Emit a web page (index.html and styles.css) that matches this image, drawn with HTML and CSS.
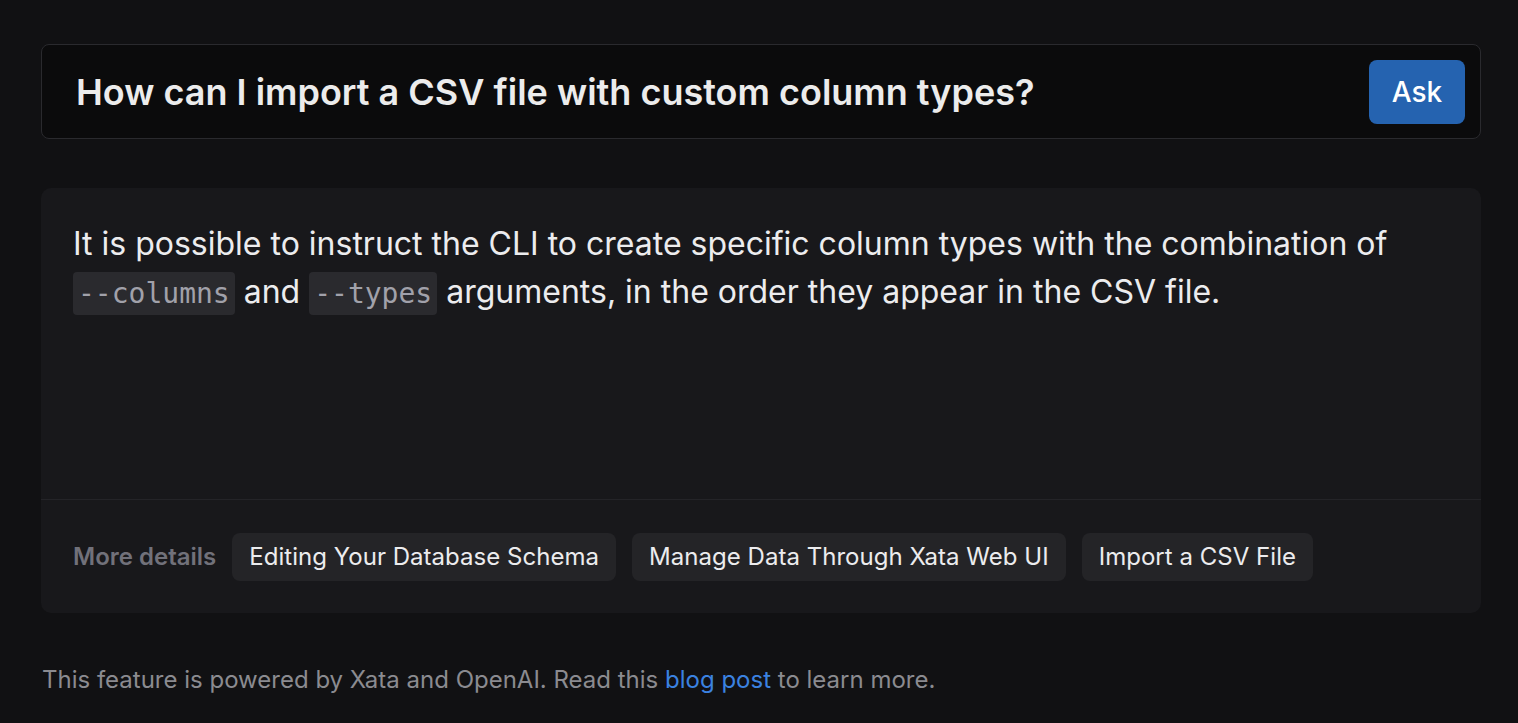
FILE: index.html
```html
<!DOCTYPE html>
<html>
<head>
<meta charset="utf-8">
<link rel="stylesheet" href="styles.css">
</head>
<body>
<main class="page">
  <form class="ask-bar">
    <div class="question">How can I import a CSV file with custom column types?</div>
    <button type="button" class="ask-btn">Ask</button>
  </form>
  <section class="answer">
    <div class="answer-body">
      <p>It is possible to instruct the CLI to create specific column types with the combination of <code>--columns</code> and <code>--types</code> arguments, in the order they appear in the CSV file.</p>
    </div>
    <div class="answer-footer">
      <span class="more">More details</span>
      <a class="chip">Editing Your Database Schema</a>
      <a class="chip">Manage Data Through Xata Web UI</a>
      <a class="chip">Import a CSV File</a>
    </div>
  </section>
  <p class="note">This feature is powered by Xata and OpenAI. Read this <a href="#">blog post</a> to learn more.</p>
</main>
</body>
</html>
```
FILE: styles.css
```css
html, body { margin: 0; padding: 0; }
body {
  background: #111113;
  font-family: Inter, "Noto Sans", sans-serif;
  color: #ececee;
  height: 723px;
  overflow: hidden;
}
.page {
  padding: 44px 37px 0 41px;
  display: flex;
  flex-direction: column;
}
.ask-bar {
  margin: 0;
  height: 95px;
  box-sizing: border-box;
  border: 1px solid #2a2a2e;
  border-radius: 8px;
  background: #0b0b0c;
  display: flex;
  align-items: center;
  justify-content: space-between;
  padding: 0 15px 0 34px;
}
.question {
  font-size: 36px;
  font-weight: 600;
  color: #ececec;
}
.ask-btn {
  width: 96px;
  height: 64px;
  border: none;
  border-radius: 8px;
  background: #2563b0;
  color: #fff;
  font-family: Inter, sans-serif;
  font-size: 28px;
  font-weight: 500;
}
.answer {
  margin-top: 49px;
  background: #18181b;
  border-radius: 10px;
  height: 425px;
  display: flex;
  flex-direction: column;
}
.answer-body {
  height: 312px;
  box-sizing: border-box;
  padding: 32px 32px 0 32px;
  border-bottom: 1px solid #242428;
}
.answer-body p {
  margin: 0;
  font-size: 32px;
  line-height: 48px;
  color: #ececee;
}
code {
  font-family: "DejaVu Sans Mono", monospace;
  font-size: 28px;
  background: #2a2a2e;
  color: #a1a1aa;
  border-radius: 4px;
  padding: 5px 5px;
  white-space: nowrap;
}
.answer-footer {
  flex: 1;
  display: flex;
  align-items: center;
  gap: 16px;
  padding: 0 32px;
}
.more {
  font-size: 24px;
  font-weight: 600;
  color: #71717a;
}
.chip {
  height: 48px;
  display: flex;
  align-items: center;
  padding: 0 17px;
  background: #242427;
  border-radius: 8px;
  font-size: 24px;
  color: #ececee;
  letter-spacing: 0.03px;
}
.note {
  margin: 52px 0 0 1px;
  font-size: 24px;
  color: #8b8b90;
}
.note a {
  color: #3b82e0;
  text-decoration: none;
}
```
